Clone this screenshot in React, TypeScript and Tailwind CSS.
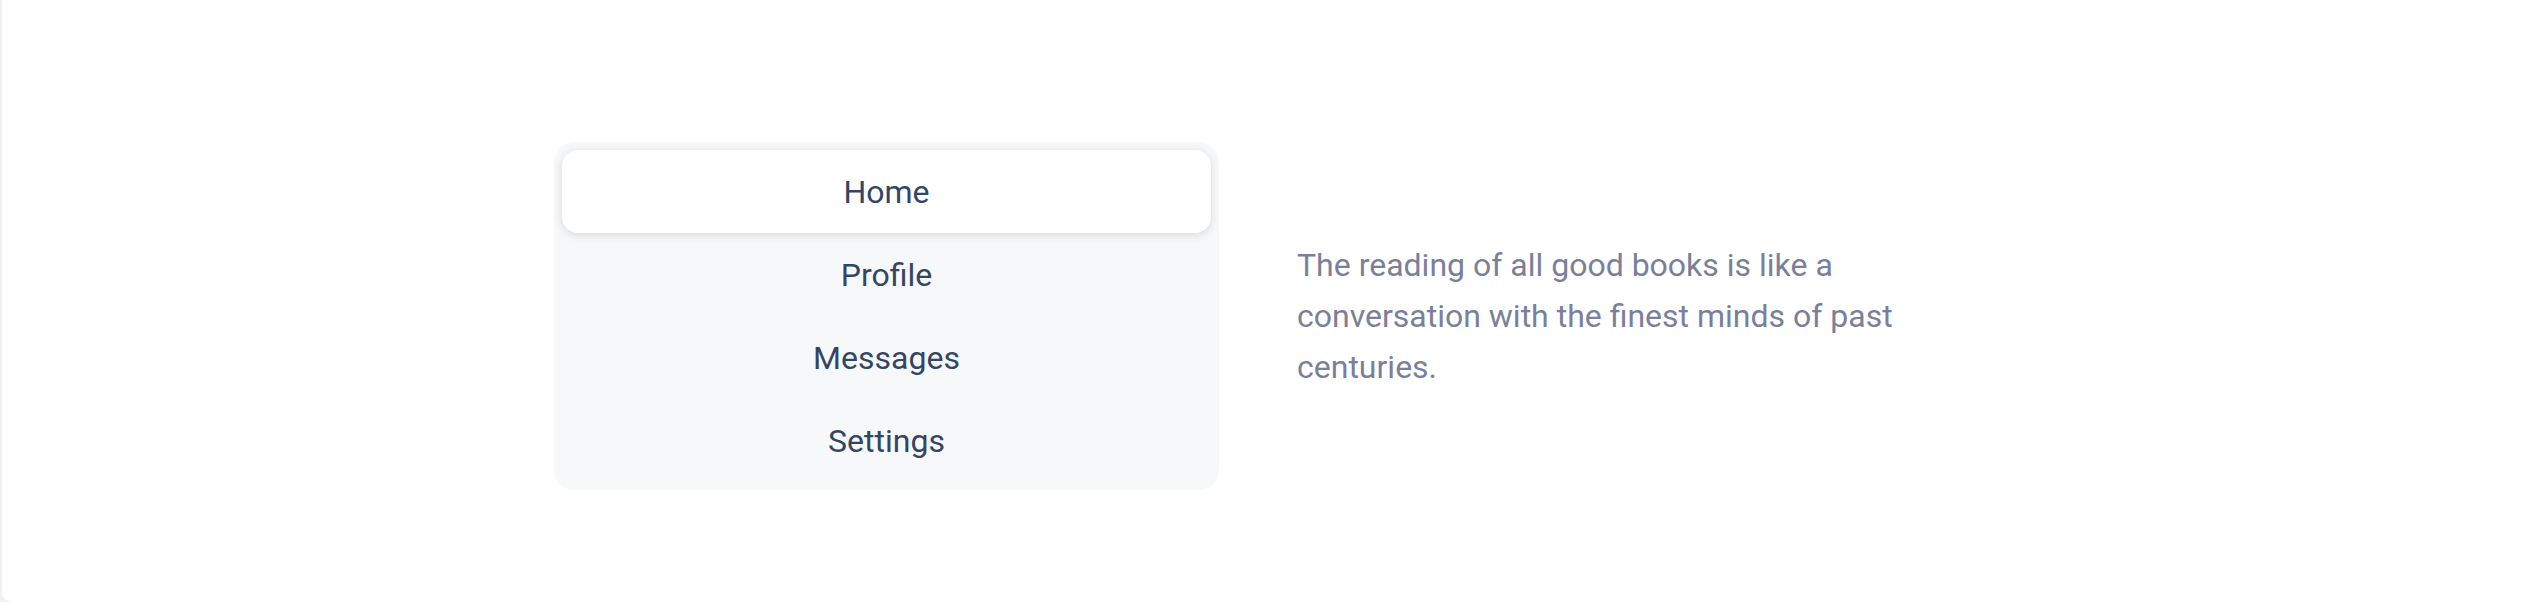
import { useState } from "react";

const tabs = ["Home", "Profile", "Messages", "Settings"];

export default function App() {
  const [active, setActive] = useState("Home");

  return (
    <div className="h-[602px] w-full bg-[#f2f2f3] pl-[2px]" style={{ fontFamily: "Roboto, 'Noto Sans', sans-serif" }}>
      <div className="flex h-full items-center justify-center rounded-bl-[10px] bg-white pt-[30px]">
        <div className="flex items-center gap-[78px]">
          {/* tab list */}
          <nav className="flex w-[665px] flex-col rounded-[20px] bg-[#f7f8fa] p-2">
            {tabs.map((t) => (
              <button
                key={t}
                onClick={() => setActive(t)}
                className={
                  t === active
                    ? "h-[83px] rounded-[16px] bg-white text-[32px] text-[#344563] shadow-[0_2px_10px_rgba(0,0,0,0.13)]"
                    : "h-[83px] rounded-[16px] text-[32px] text-[#344563]"
                }
              >
                {t}
              </button>
            ))}
          </nav>

          {/* quote */}
          <div className="w-[695px]">
            <p className="max-w-[650px] text-[32px] leading-[51px] text-[#7b809a]">
              The reading of all good books is like a conversation with the finest minds of past centuries.
            </p>
          </div>
        </div>
      </div>
    </div>
  );
}
